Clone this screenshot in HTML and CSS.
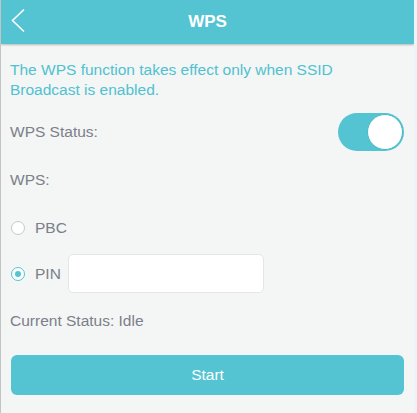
FILE: index.html
```html
<!DOCTYPE html>
<html lang="en">
<head>
  <meta charset="UTF-8">
  <meta name="viewport" content="width=device-width, initial-scale=1.0">
  <title>WPS</title>
  <link rel="stylesheet" href="styles.css">
</head>
<body>
  <div class="page">
    <div class="bar">
      <svg class="back" width="16" height="26" viewBox="0 0 16 26">
        <polyline points="13,1.5 1.5,12.5 13,23.5" fill="none" stroke="#fff" stroke-width="1.6"/>
      </svg>
      <h1>WPS</h1>
    </div>

    <div class="content">
      <p class="note">The WPS function takes effect only when SSID Broadcast is enabled.</p>

      <div class="row status">
        <span>WPS Status:</span>
        <div class="toggle"><div class="knob"></div></div>
      </div>

      <div class="row label">WPS:</div>

      <label class="row radio pbc">
        <span class="dot"></span>
        <span>PBC</span>
      </label>

      <label class="row radio pin">
        <span class="dot on"></span>
        <span>PIN</span>
        <input type="text" class="pin-box">
      </label>

      <div class="row label current">Current Status: Idle</div>

      <button class="start">Start</button>
    </div>
  </div>
</body>
</html>
```

FILE: styles.css
```css
body {
  margin: 0;
  background-color: #eef3f9;
  font-family: "Liberation Sans", Arial, sans-serif;
  font-size: 15.5px;
  color: #7b8089;
}

.page {
  width: 413px;
  height: 413px;
  border-left: 1px solid #c4c4c4;
  background-color: #f4f5f5;
  overflow: hidden;
}

.bar {
  height: 44px;
  background-color: #54c4d2;
  box-shadow: 0 1px 2px rgba(0,0,0,0.25);
  display: flex;
  align-items: center;
  justify-content: center;
  position: relative;
}

.bar h1 {
  margin: 0;
  color: white;
  font-size: 17px;
  font-weight: bold;
}

.back {
  position: absolute;
  left: 10px;
  top: 8px;
}

.content {
  padding: 16px 10px 0 9px;
}

.note {
  margin: 0;
  color: #4fc2d0;
  line-height: 20px;
}

.row {
  display: flex;
  align-items: center;
  line-height: 20px;
}

.status {
  justify-content: space-between;
  height: 38px;
  margin-top: 13px;
}

.toggle {
  width: 66px;
  height: 38px;
  border-radius: 19px;
  background-color: #54c4d2;
  position: relative;
}

.knob {
  position: absolute;
  right: 1px;
  top: 1px;
  width: 34px;
  height: 34px;
  border-radius: 50%;
  background-color: white;
  border: 1px solid #45b9c7;
}

.label {
  margin-top: 19px;
}

.radio {
  gap: 10px;
}

.pbc {
  margin-top: 28px;
}

.dot {
  width: 12px;
  height: 12px;
  border: 1px solid #c9c9c9;
  border-radius: 50%;
  background-color: white;
  margin-left: 1px;
  position: relative;
}

.dot.on {
  border-color: #54c4d2;
}

.dot.on::after {
  content: "";
  position: absolute;
  left: 3px;
  top: 3px;
  width: 6px;
  height: 6px;
  border-radius: 50%;
  background-color: #54c4d2;
}

.pin {
  margin-top: 16px;
  height: 39px;
}

.pin-box {
  width: 196px;
  height: 39px;
  box-sizing: border-box;
  border: 1px solid #e6e6e6;
  border-radius: 5px;
  background-color: white;
  margin-left: -3px;
}

.current {
  margin-top: 18px;
}

.start {
  display: block;
  width: 393px;
  height: 40px;
  margin-top: 24px;
  margin-left: 1px;
  border: none;
  border-radius: 6px;
  background-color: #54c4d2;
  color: white;
  font-family: inherit;
  font-size: 15.5px;
}
```
